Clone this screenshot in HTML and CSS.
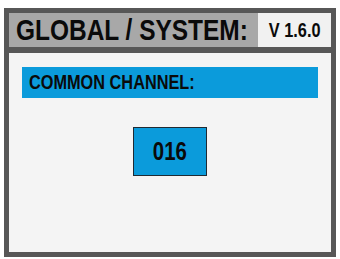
FILE: index.html
```html
<!DOCTYPE html>
<html>
<head>
<meta charset="utf-8">
<link rel="stylesheet" href="styles.css">
</head>
<body>
<div class="frame">
  <div class="header">
    <div class="title"><span class="narrow">GLOBAL / SYSTEM:</span></div>
    <div class="version"><span class="narrow center">V 1.6.0</span></div>
  </div>
  <div class="content">
    <div class="bar"><span class="narrow">COMMON CHANNEL:</span></div>
    <div class="valuewrap">
      <div class="value"><span class="narrow center">016</span></div>
    </div>
  </div>
</div>
</body>
</html>
```
FILE: styles.css
```css
html, body {
  margin: 0;
  padding: 0;
  background: #ffffff;
}
body {
  width: 340px;
  height: 259px;
  overflow: hidden;
  font-family: "Liberation Sans", Arial, sans-serif;
  font-weight: bold;
  color: #0a0a0a;
}
.narrow {
  display: inline-block;
  white-space: nowrap;
  transform: scaleX(0.815);
  transform-origin: left center;
}
.narrow.center {
  transform-origin: center center;
}
.frame {
  margin: 8px 4px 0 4px;
  width: 332px;
  height: 249px;
  box-sizing: border-box;
  border: 5px solid #575757;
  display: flex;
  flex-direction: column;
  background: #f4f4f4;
}
.header {
  height: 34px;
  display: flex;
  background: #a8a8a8;
  border-bottom: 6px solid #575757;
}
.title {
  flex: 1;
  font-size: 30px;
  line-height: 34px;
  padding-left: 7px;
  white-space: nowrap;
  overflow: hidden;
}
.version {
  width: 73px;
  background: #f1f1f1;
  font-size: 20px;
  line-height: 34px;
  text-align: center;
}
.content {
  flex: 1;
  padding: 14px 13px 0 13px;
  display: flex;
  flex-direction: column;
}
.bar {
  height: 31px;
  background: #0b9bdb;
  font-size: 20px;
  line-height: 31px;
  padding-left: 7px;
}
.valuewrap {
  display: flex;
  justify-content: center;
  padding-top: 29px;
}
.value {
  width: 72px;
  height: 47px;
  border: 1px solid #1f2a33;
  background: #0b9bdb;
  font-size: 25px;
  line-height: 47px;
  text-align: center;
}
```
